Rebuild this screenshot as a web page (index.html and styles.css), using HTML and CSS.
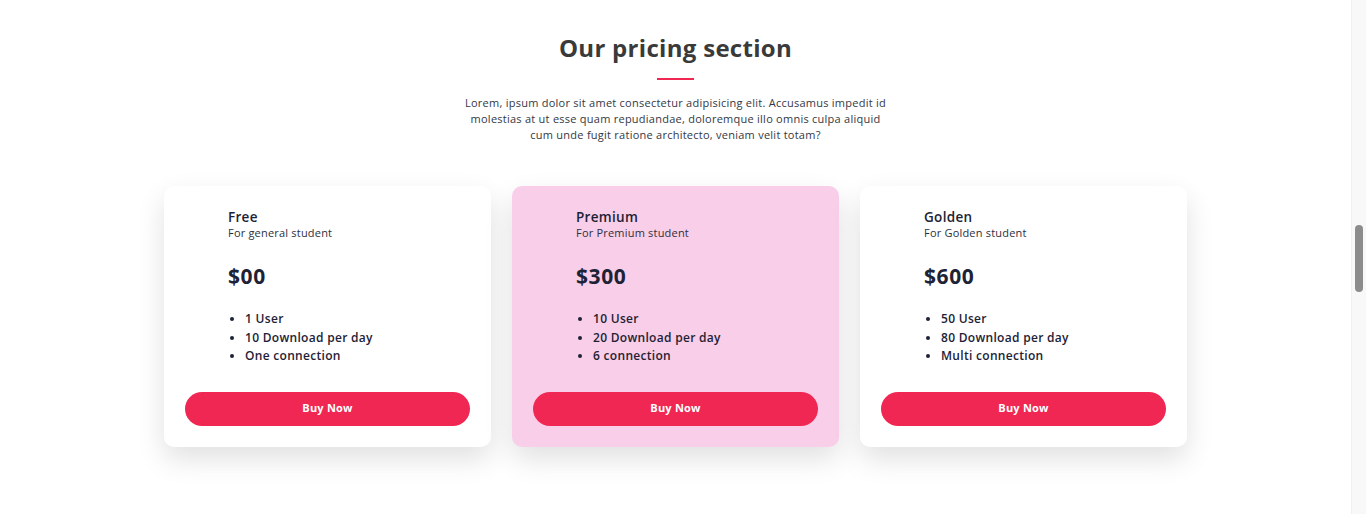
FILE: index.html
```html
<!DOCTYPE html>
<html lang="en">
<head>
<meta charset="utf-8">
<title>Pricing</title>
<link rel="stylesheet" href="styles.css">
</head>
<body>
<div class="layout">
  <main class="content">
    <section class="pricing">
      <h2 class="pricing-title">Our pricing section</h2>
      <div class="title-line"></div>
      <p class="pricing-intro">Lorem, ipsum dolor sit amet consectetur adipisicing elit. Accusamus impedit id molestias at ut esse quam repudiandae, doloremque illo omnis culpa aliquid cum unde fugit ratione architecto, veniam velit totam?</p>
      <div class="cards">
        <div class="card">
          <div class="card-body">
            <h3 class="plan">Free</h3>
            <p class="plan-sub">For general student</p>
            <div class="price">$00</div>
            <ul class="features">
              <li>1 User</li>
              <li>10 Download per day</li>
              <li>One connection</li>
            </ul>
          </div>
          <button class="buy">Buy Now</button>
        </div>
        <div class="card card-featured">
          <div class="card-body">
            <h3 class="plan">Premium</h3>
            <p class="plan-sub">For Premium student</p>
            <div class="price">$300</div>
            <ul class="features">
              <li>10 User</li>
              <li>20 Download per day</li>
              <li>6 connection</li>
            </ul>
          </div>
          <button class="buy">Buy Now</button>
        </div>
        <div class="card">
          <div class="card-body">
            <h3 class="plan">Golden</h3>
            <p class="plan-sub">For Golden student</p>
            <div class="price">$600</div>
            <ul class="features">
              <li>50 User</li>
              <li>80 Download per day</li>
              <li>Multi connection</li>
            </ul>
          </div>
          <button class="buy">Buy Now</button>
        </div>
      </div>
    </section>
  </main>
  <div class="scrollbar"><div class="scroll-thumb"></div></div>
</div>
</body>
</html>
```
FILE: styles.css
```css
html, body {
  margin: 0;
  padding: 0;
  background: #ffffff;
  overflow: hidden;
}
body {
  font-family: "Open Sans", "Noto Sans", sans-serif;
  color: #1e2235;
}
.layout {
  display: flex;
  height: 514px;
}
.content {
  flex: 1;
  min-width: 0;
}
.scrollbar {
  width: 15px;
  background: #f8f8f8;
  border-left: 1px solid #f0f0f0;
  box-sizing: border-box;
  padding-top: 225px;
  display: flex;
  justify-content: center;
}
.scroll-thumb {
  width: 8px;
  height: 67px;
  border-radius: 4px;
  background: #8c8c8c;
}
.pricing {
  box-sizing: border-box;
  padding-top: 30px;
  display: flex;
  flex-direction: column;
  align-items: center;
}
.pricing-title {
  margin: 0;
  font-family: "Open Sans", sans-serif;
  font-weight: 700;
  font-size: 24px;
  line-height: 36px;
  color: #3a3a3a;
  letter-spacing: 0.3px;
}
.title-line {
  width: 37px;
  height: 2px;
  background: #ef2752;
  margin-top: 12px;
}
.pricing-intro {
  width: 424px;
  margin: 15px 0 0;
  text-align: center;
  font-size: 11px;
  line-height: 16px;
  letter-spacing: 0.25px;
  color: #333844;
}
.cards {
  display: flex;
  gap: 21px;
  margin-top: 43px;
}
.card {
  width: 327px;
  height: 261px;
  box-sizing: border-box;
  padding: 24px 21px 21px;
  background: #ffffff;
  border-radius: 10px;
  box-shadow: 0 12px 28px rgba(0, 0, 0, 0.12);
  display: flex;
  flex-direction: column;
}
.card-featured {
  background: #f9cee8;
}
.card-body {
  flex: 1;
  padding-left: 43px;
}
.plan {
  margin: 0;
  font-size: 13.5px;
  font-weight: 600;
  line-height: 15px;
  letter-spacing: 0.3px;
  color: #1e2235;
}
.plan-sub {
  margin: 0;
  font-size: 11px;
  line-height: 15px;
  letter-spacing: 0.2px;
  color: #2c3040;
}
.price {
  margin-top: 23px;
  font-size: 21px;
  font-weight: 700;
  line-height: 26px;
  letter-spacing: 0.6px;
  color: #1e2235;
}
.features {
  margin: 21px 0 0;
  padding-left: 17px;
  font-size: 12px;
  font-weight: 600;
  line-height: 18.5px;
  letter-spacing: 0.3px;
}
.buy {
  height: 34px;
  padding: 0 0 3px;
  border: none;
  border-radius: 17px;
  background: #f02752;
  color: #ffffff;
  font-family: "Open Sans", sans-serif;
  font-weight: 700;
  font-size: 11px;
  letter-spacing: 0.2px;
  cursor: pointer;
}
```
